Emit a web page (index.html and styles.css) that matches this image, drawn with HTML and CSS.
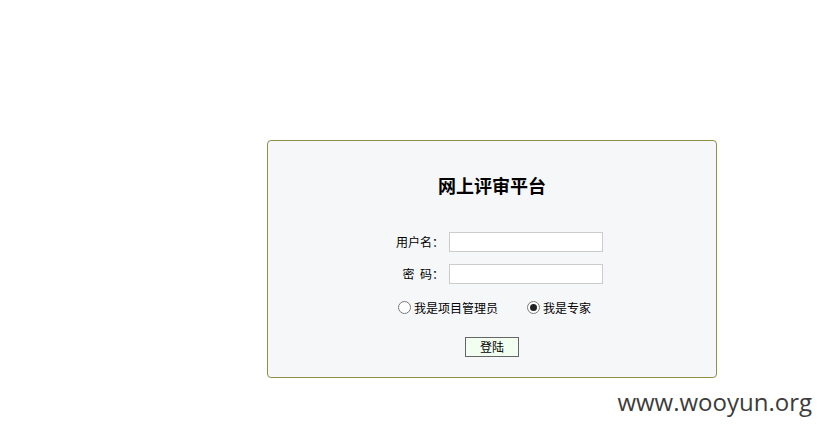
FILE: index.html
```html
<!DOCTYPE html>
<html lang="zh-CN">
<head>
    <meta charset="UTF-8">
    <title>网上评审平台</title>
    <link rel="stylesheet" href="styles.css">
</head>
<body>
<div class="page">
    <div class="login-box">
        <h1 class="login-title">网上评审平台</h1>
        <div class="login-form">
            <label class="field-label" for="username">用户名：</label>
            <input class="field-input" type="text" id="username">
            <label class="field-label" for="password">密&nbsp;&nbsp;码：</label>
            <input class="field-input" type="password" id="password">
        </div>
        <div class="role-row">
            <label class="role"><input type="radio" name="role" value="manager"><span>我是项目管理员</span></label>
            <label class="role"><input type="radio" name="role" value="expert" checked><span>我是专家</span></label>
        </div>
        <div class="submit-row">
            <button class="login-button" type="button">登陆</button>
        </div>
    </div>
</div>
<div class="watermark">www.wooyun.org</div>
</body>
</html>
```

FILE: styles.css
```css
body {
    margin: 0;
    background: #fff;
    font-family: "Noto Sans CJK SC", "Liberation Sans", sans-serif;
    font-size: 12px;
    color: #000;
}

.page {
    padding: 140px 0 0 267px;
}

.login-box {
    width: 448px;
    height: 236px;
    border: 1px solid #8f8f4a;
    border-radius: 4px;
    background: #f6f7f9;
    box-sizing: content-box;
}

.login-title {
    margin: 34px 0 0;
    font-size: 18px;
    line-height: 20px;
    font-weight: bold;
    text-align: center;
}

.login-form {
    display: grid;
    grid-template-columns: 48px 154px;
    column-gap: 5px;
    row-gap: 12px;
    margin: 37px 0 0 128px;
}

.field-label {
    line-height: 20px;
    text-align: right;
    white-space: nowrap;
}

.field-input {
    width: 154px;
    height: 20px;
    box-sizing: border-box;
    margin: 0;
    border: 1px solid #cccccc;
    background: #fff;
    padding: 0 2px;
}

.role-row {
    display: flex;
    gap: 29px;
    margin: 15px 0 0 130px;
    height: 16px;
    align-items: center;
}

.role {
    display: flex;
    align-items: center;
    gap: 3px;
}

.role input {
    appearance: none;
    width: 13px;
    height: 13px;
    margin: 0;
    border: 1px solid #7a7a7a;
    border-radius: 50%;
    background: #fff;
    box-sizing: border-box;
    position: relative;
}

.role input:checked::after {
    content: "";
    position: absolute;
    left: 2px;
    top: 2px;
    width: 7px;
    height: 7px;
    border-radius: 50%;
    background: #222;
}

.submit-row {
    margin: 22px 0 0 197px;
}

.login-button {
    width: 54px;
    height: 20px;
    margin: 0;
    padding: 0;
    border: 1px solid #666;
    background: #f2fff0;
    font-family: inherit;
    font-size: 12px;
    line-height: 18px;
    color: #000;
}

.watermark {
    position: absolute;
    right: 10px;
    top: 385px;
    font-family: "Open Sans", sans-serif;
    font-size: 24px;
    color: #3c3c3c;
}
```
